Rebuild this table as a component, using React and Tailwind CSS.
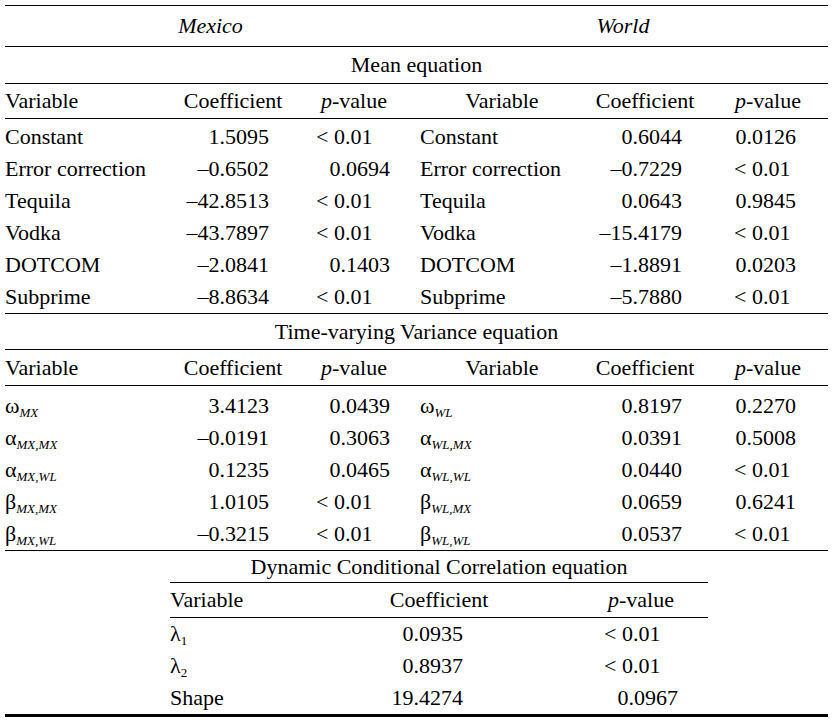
import React from 'react';

const mainRows = [
  [['Constant', '1.5095', '< 0.01'], ['Constant', '0.6044', '0.0126']],
  [['Error correction', '–0.6502', '0.0694'], ['Error correction', '–0.7229', '< 0.01']],
  [['Tequila', '–42.8513', '< 0.01'], ['Tequila', '0.0643', '0.9845']],
  [['Vodka', '–43.7897', '< 0.01'], ['Vodka', '–15.4179', '< 0.01']],
  [['DOTCOM', '–2.0841', '0.1403'], ['DOTCOM', '–1.8891', '0.0203']],
  [['Subprime', '–8.8634', '< 0.01'], ['Subprime', '–5.7880', '< 0.01']],
];

const varRows = [
  [['ω', 'MX', '3.4123', '0.0439'], ['ω', 'WL', '0.8197', '0.2270']],
  [['α', 'MX,MX', '–0.0191', '0.3063'], ['α', 'WL,MX', '0.0391', '0.5008']],
  [['α', 'MX,WL', '0.1235', '0.0465'], ['α', 'WL,WL', '0.0440', '< 0.01']],
  [['β', 'MX,MX', '1.0105', '< 0.01'], ['β', 'WL,MX', '0.0659', '0.6241']],
  [['β', 'MX,WL', '–0.3215', '< 0.01'], ['β', 'WL,WL', '0.0537', '< 0.01']],
];

const dccRows = [
  [['λ', '1'], '0.0935', '< 0.01'],
  [['λ', '2'], '0.8937', '< 0.01'],
  ['Shape', '19.4274', '0.0967'],
];

const PVal = () => (
  <span>
    <i>p</i>-value
  </span>
);

const Sym = ({ g, s, italic = true }) => (
  <span>
    {g}
    <span className={`text-[13px] ${italic ? 'italic' : ''} relative top-[4px]`}>{s}</span>
  </span>
);

// one row of the two-country table
const Row = ({ left, right, h = 'h-[32px]' }) => {
  const lp = left[2].startsWith('<');
  const rp = right[2].startsWith('<');
  return (
    <div className={`flex items-center ${h}`}>
      <div className="w-[165px]">{left[0]}</div>
      <div className="w-[126px] text-right pr-[27px]">{left[1]}</div>
      <div className={`w-[116px] ${lp ? 'pl-[20px]' : 'text-right pr-[22px]'}`}>{left[2]}</div>
      <div className="w-[180px] pl-[8px]">{right[0]}</div>
      <div className="w-[106px] text-right pr-[16px]">{right[1]}</div>
      <div className={`w-[130px] ${rp ? 'pl-[36px]' : 'text-right pr-[32px]'}`}>{right[2]}</div>
    </div>
  );
};

const HeaderRow = () => (
  <div className="flex items-center h-full">
    <div className="w-[165px]">Variable</div>
    <div className="w-[126px] text-center">Coefficient</div>
    <div className="w-[116px] text-center">
      <PVal />
    </div>
    <div className="w-[180px] text-center">Variable</div>
    <div className="w-[106px] text-center">Coefficient</div>
    <div className="w-[130px] text-center pl-[10px]">
      <PVal />
    </div>
  </div>
);

export default function App() {
  return (
    <div
      className="w-[832px] h-[720px] bg-white text-black pt-[5px] pl-[5px] text-[22px] leading-none"
      style={{ fontFamily: '"Liberation Serif", "Times New Roman", serif' }}
    >
      <div className="w-[823px]">
        <div className="border-t border-black h-[41px] flex items-center italic">
          <div className="w-[407px] text-center pl-[4px]">Mexico</div>
          <div className="w-[416px] text-center pl-[6px]">World</div>
        </div>
        <div className="border-t border-black h-[37px] flex items-center justify-center">Mean equation</div>
        <div className="border-t border-black h-[35px]">
          <HeaderRow />
        </div>
        <div className="border-t border-black pt-[2px]">
          {mainRows.map((r, i) => (
            <Row key={i} left={r[0]} right={r[1]} />
          ))}
        </div>

        <div className="border-t border-black h-[36px] flex items-center justify-center">
          Time-varying Variance equation
        </div>
        <div className="border-t border-black h-[36px]">
          <HeaderRow />
        </div>
        <div className="border-t border-black pt-[4px]">
          {varRows.map((r, i) => (
            <Row
              key={i}
              left={[<Sym g={r[0][0]} s={r[0][1]} />, r[0][2], r[0][3]]}
              right={[<Sym g={r[1][0]} s={r[1][1]} />, r[1][2], r[1][3]]}
            />
          ))}
        </div>

        {/* Dynamic Conditional Correlation block */}
        <div className="border-t border-black">
          <div className="ml-[165px] w-[538px]">
            <div className="h-[31px] flex items-center justify-center">Dynamic Conditional Correlation equation</div>
            <div className="border-t border-black h-[35px] flex items-center">
              <div className="w-[160px]">Variable</div>
              <div className="w-[218px] text-center">Coefficient</div>
              <div className="w-[160px] text-center pl-[26px]">
                <PVal />
              </div>
            </div>
            <div className="border-t border-black">
              {dccRows.map((r, i) => (
                <div key={i} className="flex items-center h-[32px]">
                  <div className="w-[160px]">
                    {Array.isArray(r[0]) ? <Sym g={r[0][0]} s={r[0][1]} italic={false} /> : r[0]}
                  </div>
                  <div className="w-[218px] text-right pr-[85px]">{r[1]}</div>
                  <div className={`w-[160px] ${r[2].startsWith('<') ? 'pl-[56px]' : 'text-right pr-[30px]'}`}>
                    {r[2]}
                  </div>
                </div>
              ))}
            </div>
          </div>
        </div>
        <div className="h-[3px] bg-black" />
      </div>
    </div>
  );
}
